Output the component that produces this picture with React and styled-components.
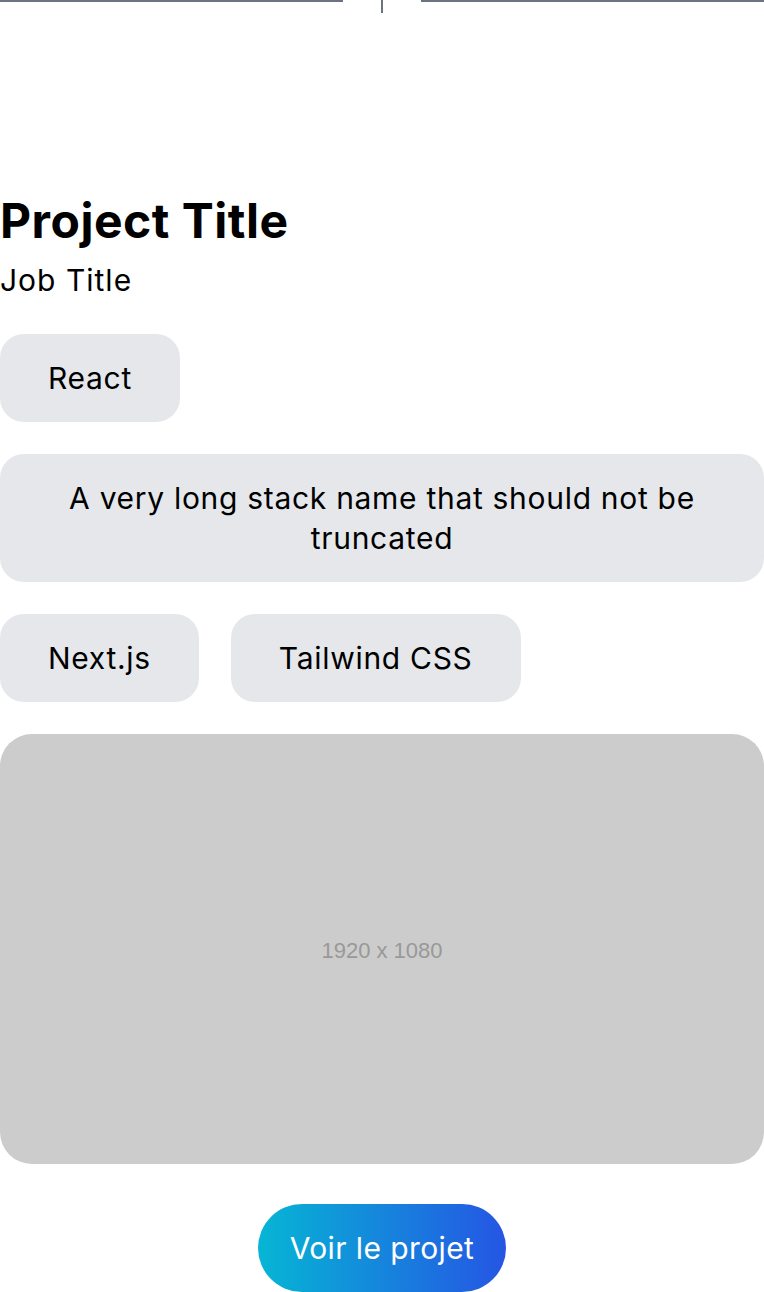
import React from 'react';
import styled, { createGlobalStyle } from 'styled-components';

const GlobalStyle = createGlobalStyle`
  html, body {
    margin: 0;
    padding: 0;
    background: #ffffff;
  }
  body {
    font-family: Inter, "Noto Sans", sans-serif;
    color: #000000;
  }
`;

const Page = styled.div`
  display: flex;
  flex-direction: column;
  width: 100%;
`;

const Divider = styled.div`
  display: flex;
  align-items: flex-start;
  height: 14px;
`;

const Rule = styled.div`
  flex: 1;
  height: 2px;
  background: #6b7280;
`;

const Notch = styled.div`
  display: flex;
  justify-content: center;
  width: 78px;
`;

const Tick = styled.div`
  width: 2px;
  height: 13px;
  background: #6b7280;
`;

const Article = styled.div`
  display: flex;
  flex-direction: column;
  padding-top: 178px;
`;

const Title = styled.h1`
  margin: 0;
  font-size: 48px;
  line-height: 58px;
  font-weight: 700;
  letter-spacing: 0.5px;
`;

const Subtitle = styled.p`
  margin: 10px 0 0;
  font-size: 30px;
  line-height: 40px;
  font-weight: 400;
  letter-spacing: 1px;
`;

const Stack = styled.ul`
  display: flex;
  flex-wrap: wrap;
  gap: 32px;
  list-style: none;
  margin: 34px 0 0;
  padding: 0;
`;

const Chip = styled.li`
  box-sizing: border-box;
  padding: 24px 48px;
  border-radius: 24px;
  background: #e5e7eb;
  font-size: 30px;
  line-height: 40px;
  letter-spacing: 0.7px;
  text-align: center;
`;

const Preview = styled.div`
  display: flex;
  align-items: center;
  justify-content: center;
  box-sizing: border-box;
  padding-top: 4px;
  margin-top: 32px;
  width: 100%;
  aspect-ratio: 16 / 9;
  border-radius: 32px;
  background: #cccccc;
  color: #999999;
  font-family: "Liberation Sans", Arial, sans-serif;
  font-size: 22px;
`;

const Actions = styled.div`
  display: flex;
  justify-content: center;
  margin-top: 40px;
`;

const Button = styled.a`
  display: inline-block;
  padding: 24px 32px;
  border-radius: 9999px;
  background: linear-gradient(to right, #06b6d4, #2555e4);
  color: #ffffff;
  font-size: 30px;
  line-height: 40px;
  letter-spacing: 0.4px;
  text-decoration: none;
`;

const stacks = [
  'React',
  'A very long stack name that should not be truncated',
  'Next.js',
  'Tailwind CSS',
];

export default function App() {
  return (
    <Page>
      <GlobalStyle />
      <Divider>
        <Rule />
        <Notch>
          <Tick />
        </Notch>
        <Rule />
      </Divider>
      <Article>
        <Title>Project Title</Title>
        <Subtitle>Job Title</Subtitle>
        <Stack>
          {stacks.map(name => (
            <Chip key={name}>{name}</Chip>
          ))}
        </Stack>
        <Preview>1920 x 1080</Preview>
        <Actions>
          <Button href="#">Voir le projet</Button>
        </Actions>
      </Article>
    </Page>
  );
}
